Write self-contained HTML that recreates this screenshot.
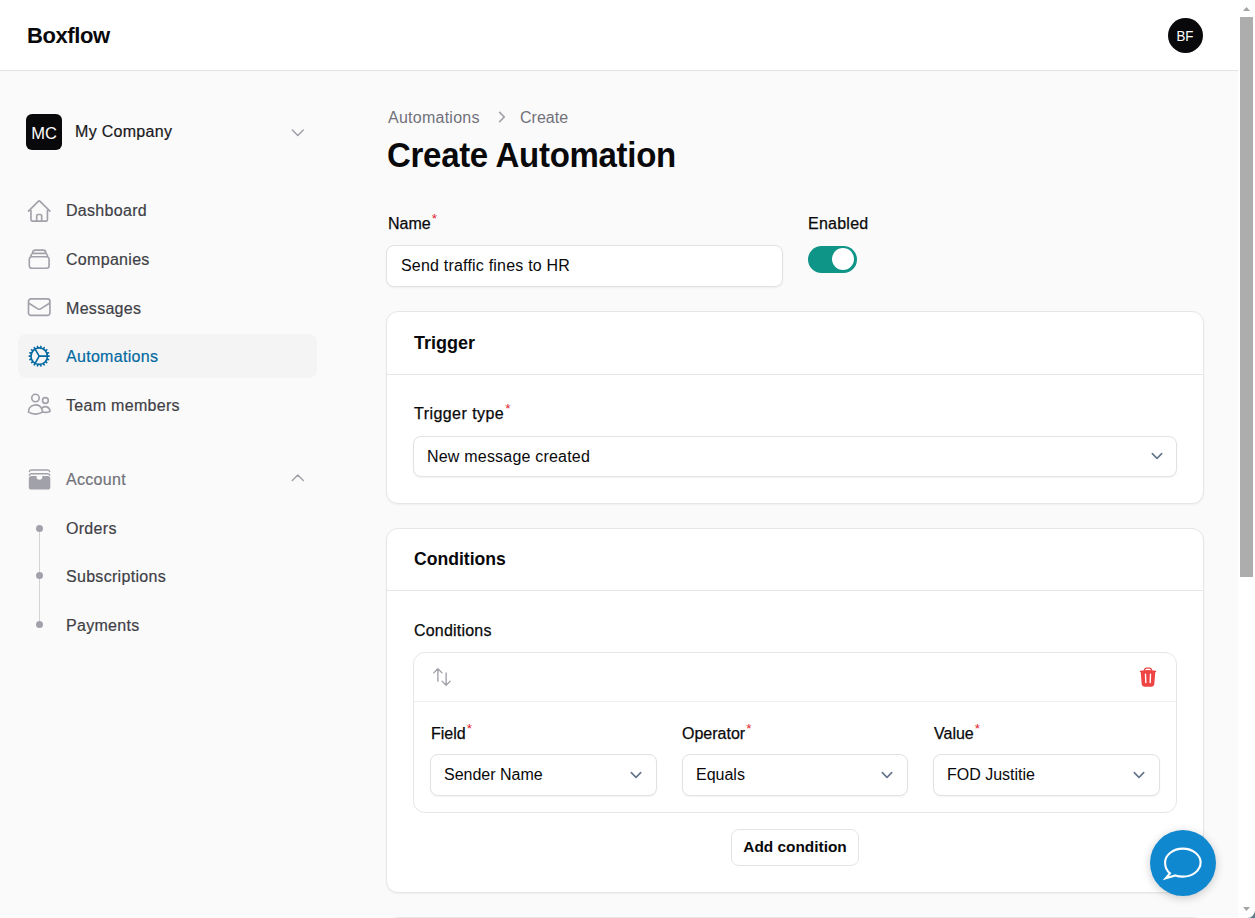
<!DOCTYPE html>
<html><head><meta charset="utf-8">
<style>
*{box-sizing:border-box;margin:0;padding:0}
html,body{width:1255px;height:918px;overflow:hidden;background:#fafafa;font-family:"Liberation Sans",sans-serif;color:#09090b}
.abs{position:absolute}
#hdr{position:absolute;left:0;top:0;width:1238px;height:71px;background:#fff;border-bottom:1px solid #e4e4e7}
#logo{position:absolute;left:27px;top:23px;font-size:22px;font-weight:bold;color:#09090b;letter-spacing:-0.4px}
#av{position:absolute;left:1167.5px;top:17.5px;width:35.5px;height:35.5px;border-radius:50%;background:#09090b;color:#fff;font-size:15.5px;text-align:center;line-height:35.5px;letter-spacing:-0.5px}
#sb{position:absolute;left:1238px;top:0;width:17px;height:918px;background:#fff}
#thumb{position:absolute;left:2px;top:17px;width:13px;height:560px;background:#adadad}
.nav{position:absolute;left:66px;font-size:16px;color:#3f3f46;white-space:nowrap;letter-spacing:0.3px;-webkit-text-stroke:0.2px}
.ico{position:absolute;left:25.8px;width:26.4px;height:26.4px}
.lbl{position:absolute;font-size:16px;color:#09090b;white-space:nowrap;-webkit-text-stroke:0.25px}
.req{-webkit-text-stroke:0;color:#e11d2a;font-size:13.5px;vertical-align:top;position:relative;top:-3.6px;margin-left:1px;letter-spacing:0}
.input{position:absolute;background:#fff;border:1px solid #e2e2e2;border-radius:8px;box-shadow:0 1px 2px rgba(0,0,0,.05)}
.input span{position:absolute;left:13px;font-size:16px;color:#09090b;white-space:nowrap}
.card{position:absolute;background:#fff;border:1px solid #e6e6e6;border-radius:12px;box-shadow:0 1px 2px rgba(0,0,0,.05)}
.chev{position:absolute;width:22px;height:22px}
</style></head>
<body>
<div id="hdr">
  <div id="logo">Boxflow</div>
  <div id="av"><span style="display:inline-block;transform:scaleX(0.86);letter-spacing:0">BF</span></div>
</div>
<div id="sb">
  <svg class="abs" style="left:0;top:0" width="17" height="17"><path d="M5 11 L8.5 7 L12 11 Z" fill="#a3a3a3"/></svg>
  <div id="thumb"></div>
  <svg class="abs" style="left:0;top:901px" width="17" height="17"><path d="M5 6 L8.5 10 L12 6 Z" fill="#a3a3a3"/></svg>
</div>

<!-- sidebar -->
<div class="abs" style="left:26px;top:114px;width:36px;height:36px;border-radius:6px;background:#09090b;color:#fff;font-size:16.5px;line-height:38.5px;text-align:center">MC</div>
<div class="nav" style="top:123px;left:75px;color:#18181b">My Company</div>
<svg class="abs" style="left:289.2px;top:124.1px" width="17.6" height="17.6" viewBox="0 0 24 24" fill="none" stroke="#a1a1aa" stroke-width="2" stroke-linecap="round" stroke-linejoin="round"><path d="M19.5 8.25l-7.5 7.5-7.5-7.5"/></svg>

<div class="abs" style="left:18px;top:334px;width:299px;height:44px;border-radius:8px;background:#f4f4f5"></div>

<svg class="ico" style="top:197.6px" viewBox="0 0 24 24" fill="none" stroke="#a1a1aa" stroke-width="1.5" stroke-linecap="round" stroke-linejoin="round"><path d="M2.25 12l8.954-8.955c.44-.439 1.152-.439 1.591 0L21.75 12M4.5 9.75v10.125c0 .621.504 1.125 1.125 1.125H9.75v-4.875c0-.621.504-1.125 1.125-1.125h2.25c.621 0 1.125.504 1.125 1.125V21h4.125c.621 0 1.125-.504 1.125-1.125V9.75M8.25 21h8.25"/></svg>
<div class="nav" style="top:202px">Dashboard</div>

<svg class="ico" style="top:246px" viewBox="0 0 24 24" fill="none" stroke="#a1a1aa" stroke-width="1.5" stroke-linecap="round" stroke-linejoin="round"><path d="M6 6.878V6a2.25 2.25 0 0 1 2.25-2.25h7.5A2.25 2.25 0 0 1 18 6v.878m-12 0c.235-.083.487-.128.75-.128h10.5c.263 0 .515.045.75.128m-12 0A2.25 2.25 0 0 0 4.5 9v.878m13.5-3A2.25 2.25 0 0 1 19.5 9v.878m0 0a2.246 2.246 0 0 0-.75-.128H5.25c-.263 0-.515.045-.75.128m15 0A2.25 2.25 0 0 1 21 12v6a2.25 2.25 0 0 1-2.25 2.25H5.25A2.25 2.25 0 0 1 3 18v-6c0-.98.626-1.813 1.5-2.122"/></svg>
<div class="nav" style="top:250.5px">Companies</div>

<svg class="ico" style="top:294.4px" viewBox="0 0 24 24" fill="none" stroke="#a1a1aa" stroke-width="1.5" stroke-linecap="round" stroke-linejoin="round"><path d="M21.75 6.75v10.5a2.25 2.25 0 0 1-2.25 2.25h-15a2.25 2.25 0 0 1-2.25-2.25V6.75m19.5 0A2.25 2.25 0 0 0 19.5 4.5h-15a2.25 2.25 0 0 0-2.25 2.25m19.5 0v.243a2.25 2.25 0 0 1-1.07 1.916l-7.5 4.615a2.25 2.25 0 0 1-2.360 0L3.32 8.91a2.25 2.25 0 0 1-1.07-1.916V6.75"/></svg>
<div class="nav" style="top:300px">Messages</div>

<svg class="ico" style="top:342.8px" viewBox="0 0 24 24" fill="none" stroke="#0369a1" stroke-width="1.5" stroke-linecap="round" stroke-linejoin="round"><path d="M4.5 12a7.5 7.5 0 0 0 15 0m-15 0a7.5 7.5 0 1 1 15 0m-15 0H3m16.5 0H21m-1.5 0H12m-8.457 3.077 1.41-.513m14.095-5.13 1.41-.513M5.106 17.785l1.15-.964m11.49-9.642 1.149-.964M7.501 19.795l.75-1.3m7.5-12.99.75-1.3m-6.063 16.658.26-1.477m2.605-14.772.26-1.477m0 17.726-.26-1.477M10.698 4.614l-.26-1.477M16.5 19.794l-.75-1.299M7.5 4.205 12 12m6.894 5.785-1.149-.964M6.256 7.178l-1.15-.964m15.352 8.864-1.41-.513M4.954 9.435l-1.41-.514M12.002 12l-3.75 6.495"/></svg>
<div class="nav" style="top:347.5px;color:#0369a1">Automations</div>

<svg class="ico" style="top:391.2px" viewBox="0 0 24 24" fill="none" stroke="#a1a1aa" stroke-width="1.5" stroke-linecap="round" stroke-linejoin="round"><path d="M15 19.128a9.38 9.38 0 0 0 2.625.372 9.337 9.337 0 0 0 4.121-.952 4.125 4.125 0 0 0-7.533-2.493M15 19.128v-.003c0-1.113-.285-2.16-.786-3.070M15 19.128v.106A12.318 12.318 0 0 1 8.624 21c-2.331 0-4.512-.645-6.374-1.766l-.001-.109a6.375 6.375 0 0 1 11.964-3.070M12 6.375a3.375 3.375 0 1 1-6.75 0 3.375 3.375 0 0 1 6.75 0Zm8.25 2.25a2.625 2.625 0 1 1-5.25 0 2.625 2.625 0 0 1 5.25 0Z"/></svg>
<div class="nav" style="top:397px">Team members</div>

<svg class="abs" style="left:28px;top:469px" width="23" height="22" viewBox="0 0 23 22" fill="#a1a1aa"><path d="M1.3 2.6 C1.6 1.5 2.3 1 3.6 1 H19.4 C20.7 1 21.4 1.5 21.7 2.6" stroke="#a1a1aa" stroke-width="1.4" fill="none" stroke-linecap="round"/><path d="M1.3 6.2 C1.6 5.2 2.3 4.7 3.6 4.7 H19.4 C20.7 4.7 21.4 5.2 21.7 6.2" stroke="#a1a1aa" stroke-width="1.4" fill="none" stroke-linecap="round"/><path d="M3.4 7.1 H8.6 V8.2 A2.85 2.5 0 0 0 14.3 8.2 V7.1 H19.7 A2.6 2.6 0 0 1 22.3 9.7 V17.9 A2.6 2.6 0 0 1 19.7 20.5 H3.4 A2.6 2.6 0 0 1 0.8 17.9 V9.7 A2.6 2.6 0 0 1 3.4 7.1 Z"/></svg>
<div class="nav" style="top:471px;color:#71717a">Account</div>
<svg class="abs" style="left:289.2px;top:469.2px" width="17.6" height="17.6" viewBox="0 0 24 24" fill="none" stroke="#a1a1aa" stroke-width="2" stroke-linecap="round" stroke-linejoin="round"><path d="M4.5 15.75l7.5-7.5 7.5 7.5"/></svg>

<div class="abs" style="left:39px;top:528px;width:1.2px;height:96px;background:#d4d4d8"></div>
<div class="abs" style="left:36.1px;top:524.5px;width:7px;height:7px;border-radius:50%;background:#a1a1aa"></div>
<div class="abs" style="left:36.1px;top:572.4px;width:7px;height:7px;border-radius:50%;background:#a1a1aa"></div>
<div class="abs" style="left:36.1px;top:620.8px;width:7px;height:7px;border-radius:50%;background:#a1a1aa"></div>
<div class="nav" style="top:520px">Orders</div>
<div class="nav" style="top:568px">Subscriptions</div>
<div class="nav" style="top:617px">Payments</div>

<!-- main -->
<div class="abs" style="left:388px;top:108.5px;font-size:16px;color:#71717a;white-space:nowrap;letter-spacing:0.25px">Automations</div>
<svg class="abs" style="left:490px;top:106px" width="22" height="22" viewBox="0 0 20 20" fill="#a1a1aa"><path fill-rule="evenodd" d="M8.22 5.22a.75.75 0 0 1 1.06 0l4.25 4.25a.75.75 0 0 1 0 1.06l-4.25 4.25a.75.75 0 0 1-1.06-1.06L11.94 10 8.22 6.28a.75.75 0 0 1 0-1.06Z" clip-rule="evenodd"/></svg>
<div class="abs" style="left:520px;top:108.5px;font-size:16px;color:#71717a;white-space:nowrap">Create</div>
<div class="abs" style="left:387px;top:136.5px;font-size:33px;letter-spacing:-0.3px;font-weight:bold;color:#09090b;white-space:nowrap;transform:scaleY(1.05);transform-origin:0 60%">Create Automation</div>

<div class="lbl" style="left:388px;top:215px">Name<span class="req">*</span></div>
<div class="input" style="left:386px;top:245px;width:397px;height:42px"><span style="top:11px;left:14px;letter-spacing:0.2px">Send traffic fines to HR</span></div>

<div class="lbl" style="left:808px;top:215px;letter-spacing:0.25px">Enabled</div>
<div class="abs" style="left:808px;top:246px;width:49px;height:27px;border-radius:13.5px;background:#0f9488"></div>
<div class="abs" style="left:831.8px;top:248px;width:22.4px;height:22.4px;border-radius:50%;background:#fff"></div>

<!-- trigger card -->
<div class="card" style="left:386px;top:311px;width:818px;height:193px">
  <div class="abs" style="left:27px;top:21px;font-size:18px;font-weight:bold;color:#09090b">Trigger</div>
  <div class="abs" style="left:0;top:62px;width:816px;height:1px;background:#e6e6e6"></div>
  <div class="lbl" style="left:27px;top:93px;letter-spacing:0.45px">Trigger type<span class="req">*</span></div>
  <div class="input" style="left:26px;top:124px;width:764px;height:41px"><span style="top:10.5px;letter-spacing:0.2px">New message created</span>
    <svg class="chev" style="left:731.5px;top:6.8px" viewBox="0 0 20 20" fill="#64748b"><path fill-rule="evenodd" d="M5.22 8.22a.75.75 0 0 1 1.06 0L10 11.94l3.72-3.72a.75.75 0 1 1 1.06 1.06l-4.25 4.25a.75.75 0 0 1-1.06 0L5.22 9.28a.75.75 0 0 1 0-1.06Z" clip-rule="evenodd"/></svg></div>
</div>

<!-- conditions card -->
<div class="card" style="left:386px;top:528px;width:818px;height:365px">
  <div class="abs" style="left:27px;top:20px;font-size:17.6px;font-weight:bold;color:#09090b">Conditions</div>
  <div class="abs" style="left:0;top:61px;width:816px;height:1px;background:#e6e6e6"></div>
  <div class="lbl" style="left:27px;top:92.5px;letter-spacing:0.2px">Conditions</div>
  <div class="abs" style="left:26px;top:123px;width:764px;height:161px;border:1px solid #e6e6e6;border-radius:12px;background:#fff">
    <svg class="abs" style="left:17px;top:12.8px" width="22" height="22" viewBox="0 0 24 24" fill="none" stroke="#a1a1aa" stroke-width="1.5" stroke-linecap="round" stroke-linejoin="round"><path d="M3 7.5 7.5 3m0 0L12 7.5M7.5 3v13.5m13.5 0L16.5 21m0 0L12 16.5m4.5 4.5V7.5"/></svg>
    <svg class="abs" style="left:723px;top:13px" width="22" height="22" viewBox="0 0 24 24" fill="#ef4444"><path fill-rule="evenodd" d="M16.5 4.478v.227a48.816 48.816 0 0 1 3.878.512.75.75 0 1 1-.256 1.478l-.209-.035-1.005 13.07a3 3 0 0 1-2.991 2.77H8.084a3 3 0 0 1-2.991-2.77L4.087 6.66l-.209.035a.75.75 0 0 1-.256-1.478A48.567 48.567 0 0 1 7.5 4.705v-.227c0-1.564 1.213-2.9 2.816-2.951a52.662 52.662 0 0 1 3.369 0c1.603.051 2.815 1.387 2.815 2.951Zm-6.136-1.452a51.196 51.196 0 0 1 3.273 0C14.39 3.05 15 3.684 15 4.478v.113a49.488 49.488 0 0 0-6 0v-.113c0-.794.609-1.428 1.364-1.452Zm-.355 5.945a.75.75 0 1 0-1.5.058l.347 9a.75.75 0 1 0 1.499-.058l-.346-9Zm5.48.058a.75.75 0 1 0-1.498-.058l-.347 9a.75.75 0 0 0 1.5.058l.345-9Z" clip-rule="evenodd"/></svg>
    <div class="abs" style="left:0;top:48px;width:762px;height:1px;background:#efefef"></div>
    <div class="lbl" style="left:17px;top:71.5px">Field<span class="req">*</span></div>
    <div class="lbl" style="left:268px;top:71.5px">Operator<span class="req">*</span></div>
    <div class="lbl" style="left:520px;top:71.5px">Value<span class="req">*</span></div>
    <div class="input" style="left:16px;top:101px;width:227px;height:42px"><span style="top:11px">Sender Name</span>
      <svg class="chev" style="left:193.5px;top:8.3px" viewBox="0 0 20 20" fill="#64748b"><path fill-rule="evenodd" d="M5.22 8.22a.75.75 0 0 1 1.06 0L10 11.94l3.72-3.72a.75.75 0 1 1 1.06 1.06l-4.25 4.25a.75.75 0 0 1-1.06 0L5.22 9.28a.75.75 0 0 1 0-1.06Z" clip-rule="evenodd"/></svg></div>
    <div class="input" style="left:268px;top:101px;width:226px;height:42px"><span style="top:11px">Equals</span>
      <svg class="chev" style="left:192.5px;top:8.3px" viewBox="0 0 20 20" fill="#64748b"><path fill-rule="evenodd" d="M5.22 8.22a.75.75 0 0 1 1.06 0L10 11.94l3.72-3.72a.75.75 0 1 1 1.06 1.06l-4.25 4.25a.75.75 0 0 1-1.06 0L5.22 9.28a.75.75 0 0 1 0-1.06Z" clip-rule="evenodd"/></svg></div>
    <div class="input" style="left:519px;top:101px;width:227px;height:42px"><span style="top:11px">FOD Justitie</span>
      <svg class="chev" style="left:193.5px;top:8.3px" viewBox="0 0 20 20" fill="#64748b"><path fill-rule="evenodd" d="M5.22 8.22a.75.75 0 0 1 1.06 0L10 11.94l3.72-3.72a.75.75 0 1 1 1.06 1.06l-4.25 4.25a.75.75 0 0 1-1.06 0L5.22 9.28a.75.75 0 0 1 0-1.06Z" clip-rule="evenodd"/></svg></div>
  </div>
  <div class="abs" style="left:344px;top:300px;width:128px;height:37px;border:1px solid #e4e4e7;border-radius:8px;background:#fff;font-size:15.4px;font-weight:bold;text-align:center;line-height:34px;color:#09090b">Add condition</div>
</div>
<div class="card" style="left:387px;top:917px;width:817px;height:100px"></div>

<!-- chat bubble -->
<div class="abs" style="left:1150px;top:830px;width:66px;height:66px;border-radius:50%;background:#1088cf;box-shadow:0 2px 10px rgba(0,0,0,.2)">
  <svg class="abs" style="left:12px;top:16px" width="42" height="36" viewBox="0 0 42 36" fill="none" stroke="#fff" stroke-width="2.1" stroke-linejoin="miter"><path d="M8 27.3 C4.6 24.8 3.1 21 3.1 16.6 C3.1 8.9 11 2.6 20.85 2.6 C30.7 2.6 38.6 8.9 38.6 16.6 C38.6 24.3 30.7 30.6 20.85 30.6 C18 30.6 15.6 30.2 13.4 29.4 L3.8 32.2 Z"/></svg>
</div>
<svg class="abs" style="left:1239px;top:902px" width="16" height="16" viewBox="0 0 16 16"><path d="M16 8.5 A8 8 0 0 1 8.5 16 L16 16 Z" fill="#5f7d8a"/></svg>
</body></html>
